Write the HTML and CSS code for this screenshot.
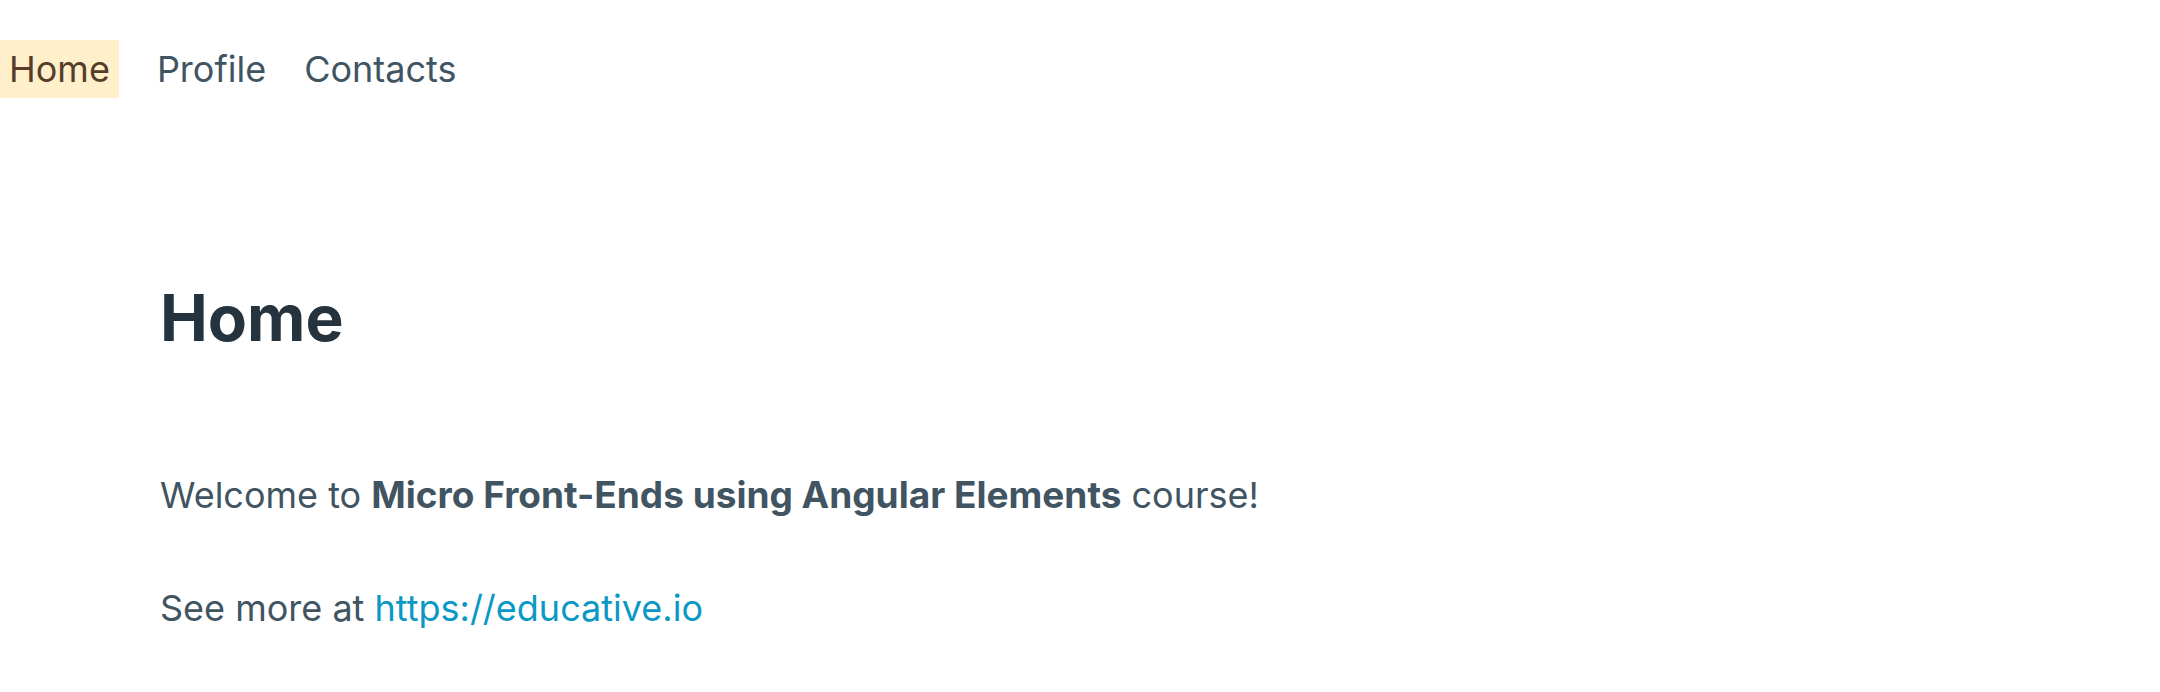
FILE: index.html
```html
<!DOCTYPE html>
<html lang="en">
<head>
<meta charset="utf-8">
<title>Home</title>
<link rel="stylesheet" href="styles.css">
</head>
<body>
<nav class="nav" aria-label="Main">
<a class="nav-link active" href="#home" aria-current="page">Home</a>
<a class="nav-link" href="#profile">Profile</a>
<a class="nav-link" href="#contacts">Contacts</a>
</nav>
<main class="content">
<h1 class="title">Home</h1>
<p class="text">Welcome to <strong class="course">Micro Front-Ends using Angular Elements</strong> course!</p>
<p class="text">See more at <a class="link" href="https://educative.io">https://educative.io</a></p>
</main>
</body>
</html>
```
FILE: styles.css
```css
body {
  margin: 0;
  background: #fff;
  color: #415462;
  font-family: Inter, sans-serif;
  font-size: 36px;
  line-height: 58px;
}

.nav {
  display: flex;
  align-items: center;
  gap: 38px;
  padding-top: 40px;
}

.nav-link {
  color: inherit;
  text-decoration: none;
}

.active {
  padding: 0 9px;
  background: #ffefcb;
  color: #573c2a;
}

.content {
  padding: 181px 160px 50px;
}

.title {
  margin: 0 0 109px;
  color: #24333e;
  font-size: 64px;
  line-height: 78px;
  font-weight: 700;
}

.text {
  margin: 0 0 55px;
}

.course {
  font-size: 37px;
  font-weight: 700;
}

.text:last-child {
  margin-bottom: 0;
}

.link {
  color: #0c98c4;
  text-decoration: none;
}
```
